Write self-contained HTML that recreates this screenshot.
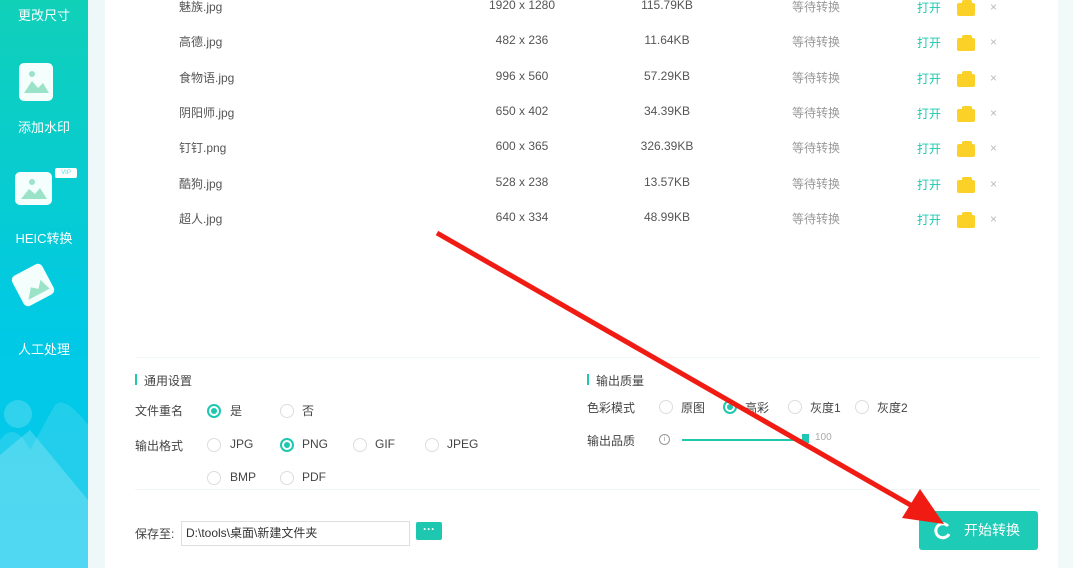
<!DOCTYPE html>
<html><head><meta charset="utf-8"><style>
*{margin:0;padding:0;box-sizing:border-box}
body{width:1073px;height:568px;overflow:hidden;background:#fff;font-family:"Liberation Sans","Noto Sans CJK SC",sans-serif;font-size:12px;color:#555;position:relative}
.abs{position:absolute;white-space:nowrap}
.side{position:absolute;left:0;top:0;width:88px;height:568px;background:linear-gradient(#10d0b8,#00c9e6 60%,#08c8ee);overflow:hidden}
.strip{position:absolute;left:88px;top:0;width:17px;height:568px;background:#eef8f8}
.rstrip{position:absolute;left:1058px;top:0;width:15px;height:568px;background:#f2f9f9}
.st{color:#fff;font-size:13px;text-align:center;width:88px;left:0}
.icon{position:absolute;background:#f4fffd;border-radius:5px}
.rad{position:absolute;width:14px;height:14px;border:1px solid #ddd;border-radius:50%;background:#fff}
.rad.on{border:2px solid #1ec8b0}
.rad.on::after{content:"";position:absolute;left:2px;top:2px;width:6px;height:6px;border-radius:50%;background:#1ec8b0}
.lbl{font-size:12px;color:#444}
.folder{position:absolute;width:18px;height:13px;background:#fcd127;border-radius:2px}
.folder::before{content:"";position:absolute;left:5px;top:-3px;width:10px;height:4px;background:#fcd127;border-radius:2px 2px 0 0}
</style></head><body>
<div class="side">
<div class="abs st" style="top:5px">更改尺寸</div>
<div class="icon" style="left:19px;top:63px;width:34px;height:38px"><svg width="34" height="38"><circle cx="13" cy="11" r="3" fill="#9be3c8"/><path d="M5 30 L13 18 L19 25 L24 20 L30 30Z" fill="#9be3c8"/></svg></div>
<div class="abs st" style="top:117px">添加水印</div>
<div class="icon" style="left:15px;top:172px;width:37px;height:33px"><svg width="37" height="33"><circle cx="17" cy="10" r="3" fill="#9be3c8"/><path d="M6 27 L14 17 L20 22 L25 16 L32 27Z" fill="#9be3c8"/></svg></div>
<div class="abs" style="left:55px;top:168px;width:22px;height:10px;background:#fff;border-radius:2px;font-size:6px;color:#5dd;text-align:center;line-height:10px">VIP</div>
<div class="abs st" style="top:228px">HEIC转换</div>
<div class="icon" style="left:16px;top:268px;width:34px;height:34px;transform:rotate(-28deg)"><svg width="34" height="34"><path d="M6 28 L14 18 L20 23 L26 16 L30 28Z" fill="#9be3c8"/></svg></div>
<div class="abs st" style="top:339px">人工处理</div>
<div class="abs" style="left:4px;top:400px;width:28px;height:28px;border-radius:50%;background:rgba(255,255,255,.18)"></div>
<svg class="abs" style="left:0;top:380px" width="88" height="188"><path d="M0 60 Q15 40 30 70 L55 25 Q65 15 88 45 V188 H0Z" fill="rgba(255,255,255,.12)"/><path d="M0 75 L30 50 L88 120 V188 H0Z" fill="rgba(255,255,255,.2)"/></svg>
</div>
<div class="strip"></div>
<div class="rstrip"></div>

<div id="rows"></div>
<script>
var r=[["魅族.jpg","1920 x 1280","115.79KB"],["高德.jpg","482 x 236","11.64KB"],["食物语.jpg","996 x 560","57.29KB"],["阴阳师.jpg","650 x 402","34.39KB"],["钉钉.png","600 x 365","326.39KB"],["酷狗.jpg","528 x 238","13.57KB"],["超人.jpg","640 x 334","48.99KB"]];
var h="";r.forEach(function(a,i){var y=-2+i*35.3;
h+='<div class="abs" style="left:179px;top:'+y+'px">'+a[0]+'</div>';
h+='<div class="abs" style="left:462px;width:120px;text-align:center;top:'+y+'px">'+a[1]+'</div>';
h+='<div class="abs" style="left:607px;width:120px;text-align:center;top:'+y+'px">'+a[2]+'</div>';
h+='<div class="abs" style="left:792px;top:'+y+'px;color:#999">等待转换</div>';
h+='<div class="abs" style="left:917px;top:'+(y+1)+'px;color:#1ec8b0">打开</div>';
h+='<div class="folder" style="left:957px;top:'+(y+5)+'px"></div>';
h+='<div class="abs" style="left:990px;top:'+(y+2)+'px;color:#bbb">×</div>';});
document.getElementById("rows").innerHTML=h;
</script>

<div class="abs" style="left:135px;top:357px;width:905px;height:1px;background:#eef6f6"></div>
<div class="abs" style="left:135px;top:489px;width:905px;height:1px;background:#eef6f6"></div>

<div class="abs" style="left:135px;top:374px;width:2px;height:11px;background:#1ec8b0"></div>
<div class="abs lbl" style="left:144px;top:372px">通用设置</div>
<div class="abs lbl" style="left:135px;top:402px">文件重名</div>
<div class="rad on" style="left:207px;top:404px"></div><div class="abs lbl" style="left:230px;top:402px">是</div>
<div class="rad" style="left:280px;top:404px"></div><div class="abs lbl" style="left:302px;top:402px">否</div>
<div class="abs lbl" style="left:135px;top:437px">输出格式</div>
<div class="rad" style="left:207px;top:438px"></div><div class="abs lbl" style="left:230px;top:437px">JPG</div>
<div class="rad on" style="left:280px;top:438px"></div><div class="abs lbl" style="left:302px;top:437px">PNG</div>
<div class="rad" style="left:353px;top:438px"></div><div class="abs lbl" style="left:375px;top:437px">GIF</div>
<div class="rad" style="left:425px;top:438px"></div><div class="abs lbl" style="left:447px;top:437px">JPEG</div>
<div class="rad" style="left:207px;top:471px"></div><div class="abs lbl" style="left:230px;top:470px">BMP</div>
<div class="rad" style="left:280px;top:471px"></div><div class="abs lbl" style="left:302px;top:470px">PDF</div>

<div class="abs" style="left:587px;top:374px;width:2px;height:11px;background:#1ec8b0"></div>
<div class="abs lbl" style="left:596px;top:372px">输出质量</div>
<div class="abs lbl" style="left:587px;top:399px">色彩模式</div>
<div class="rad" style="left:659px;top:400px"></div><div class="abs lbl" style="left:681px;top:399px">原图</div>
<div class="rad on" style="left:723px;top:400px"></div><div class="abs lbl" style="left:745px;top:399px">高彩</div>
<div class="rad" style="left:788px;top:400px"></div><div class="abs lbl" style="left:810px;top:399px">灰度1</div>
<div class="rad" style="left:855px;top:400px"></div><div class="abs lbl" style="left:877px;top:399px">灰度2</div>
<div class="abs lbl" style="left:587px;top:432px">输出品质</div>
<div class="abs" style="left:659px;top:434px;width:11px;height:11px;border:1px solid #999;border-radius:50%;font-size:7px;text-align:center;line-height:9px;color:#999">i</div>
<div class="abs" style="left:682px;top:439px;width:125px;height:2px;background:#1ec8b0"></div>
<div class="abs" style="left:802px;top:434px;width:7px;height:9px;background:#1ec8b0"></div>
<div class="abs" style="left:815px;top:432px;font-size:10px;color:#aaa">100</div>

<div class="abs lbl" style="left:135px;top:525px">保存至:</div>
<div class="abs" style="left:181px;top:521px;width:229px;height:25px;border:1px solid #ddd;padding-left:4px;line-height:23px;color:#333">D:\tools\桌面\新建文件夹</div>
<div class="abs" style="left:416px;top:522px;width:26px;height:18px;background:#1ec8b0;border-radius:2px;color:#fff;text-align:center;line-height:14px;font-weight:bold">···</div>

<div class="abs" style="left:919px;top:511px;width:119px;height:39px;background:#1ecbb6;border-radius:3px;color:#fff;font-size:14px;line-height:39px;padding-left:45px">开始转换</div>
<svg class="abs" style="left:932px;top:520px" width="22" height="22"><path d="M16 6 A7 7 0 1 0 17 14" fill="none" stroke="#fff" stroke-width="3"/></svg>

<svg class="abs" style="left:0;top:0" width="1073" height="568"><line x1="437" y1="233" x2="914" y2="507" stroke="#f01c14" stroke-width="5"/><polygon points="944,524 902,518 920,489" fill="#f01c14"/></svg>
</body></html>
